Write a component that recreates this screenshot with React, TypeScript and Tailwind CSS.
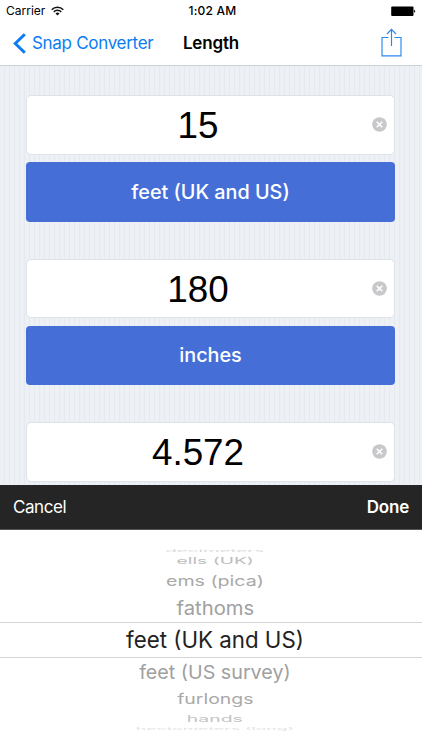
import React from "react";

interface Conversion {
  value: string;
  unit?: string;
}

const conversions: Conversion[] = [
  { value: "15", unit: "feet (UK and US)" },
  { value: "180", unit: "inches" },
  { value: "4.572" },
];

// Rows of the wheel, flattened towards the top and bottom edges
const wheelAbove = [
  { label: "decimeters", row: "h-[8px] text-[#dadada]", text: "scale-x-[0.94] scale-y-[0.16]" },
  { label: "ells (UK)", row: "h-[12px] text-[#bdbdbd]", text: "scale-x-[0.96] scale-y-[0.45]" },
  { label: "ems (pica)", row: "h-[27px] text-[#a9a9a9]", text: "scale-x-[0.98] scale-y-[0.72]" },
  { label: "fathoms", row: "h-[28px] text-[#a0a0a0]", text: "scale-x-[1.01] scale-y-[0.95]" },
];

const wheelBelow = [
  { label: "feet (US survey)", row: "h-[28px] text-[#a0a0a0]", text: "scale-x-[0.985] scale-y-[0.95]" },
  { label: "furlongs", row: "h-[26px] text-[#a9a9a9]", text: "scale-x-[0.97] scale-y-[0.72]" },
  { label: "hands", row: "h-[13px] text-[#c4c4c4]", text: "scale-x-[0.97] scale-y-[0.45]" },
  { label: "hectometers (long)", row: "h-[7px] text-[#e2e2e2]", text: "scale-x-[0.88] scale-y-[0.16]" },
];

const StatusBar = () => (
  <div className="grid h-[22px] grid-cols-3 items-center px-[6px] text-[12px] leading-none">
    <div className="flex items-center gap-[6px]">
      <span>Carrier</span>
      <svg width="13" height="10" viewBox="0 0 13 10" fill="none" stroke="#111" strokeWidth="1.5">
        <path d="M0.7 3.7a8.2 8.2 0 0 1 11.6 0" />
        <path d="M2.8 5.9a5.2 5.2 0 0 1 7.4 0" />
        <path d="M6.5 9.5 4.5 7.5a2.8 2.8 0 0 1 4 0z" fill="#111" stroke="none" />
      </svg>
    </div>
    <span className="pl-[3px] text-center font-medium tracking-[0.25px]">1:02 AM</span>
    <svg className="justify-self-end" width="26" height="11" viewBox="0 0 26 11">
      <rect x="1.2" y="0.5" width="22.3" height="9.5" rx="1" />
      <path d="M24.1 3.7v3q1-.4 1-1.5t-1-1.5z" />
    </svg>
  </div>
);

const NavBar = () => (
  <div className="grid h-[43px] grid-cols-[1fr_auto_1fr] items-center px-[13px]">
    <button className="flex items-center gap-[6px] text-[17px] leading-none text-[#0b7cf4]">
      <svg width="13" height="21" viewBox="0 0 13 21" fill="none" stroke="currentColor" strokeWidth="3">
        <path d="M11.8 1.2 2.3 10.5l9.5 9.3" />
      </svg>
      <span className="tracking-[-0.3px] whitespace-nowrap">Snap Converter</span>
    </button>
    <h1 className="text-[17px] leading-none font-semibold tracking-[-0.15px]">Length</h1>
    <svg className="mr-[7px] mb-[2px] justify-self-end" width="21" height="29" viewBox="0 0 21 29" fill="none" stroke="#2b88ea" strokeWidth="1.15">
      <path d="M7.5 9.5H1v18.3h19V9.5h-6.5M10.5 18V1.5M6 6l4.5-4.7L15 6" />
    </svg>
  </div>
);

const ConversionCard = ({ value, unit }: Conversion) => (
  <div className="flex flex-col gap-[7.5px]">
    <div className="relative flex h-[59.5px] items-center justify-center rounded-[5px] border border-[#dfe3e8] bg-white pr-[25px]">
      <span className="pt-[4px] font-['Liberation_Sans',sans-serif] text-[36.8px] leading-none">{value}</span>
      <svg className="absolute right-[7px]" width="15" height="15" viewBox="0 0 15 15">
        <circle cx="7.5" cy="7.5" r="7.3" fill="#c8c8cb" />
        <path d="m4.7 4.7 5.6 5.6m0-5.6-5.6 5.6" stroke="#fff" strokeWidth="1.6" />
      </svg>
    </div>
    {unit && (
      <button className="h-[59.5px] rounded-[4px] bg-[#456fd7] pt-[2px] text-[19.8px] font-medium text-white">
        {unit}
      </button>
    )}
  </div>
);

const App = () => {
  return (
    <div className="flex h-[750px] w-[422px] flex-col overflow-hidden bg-white font-['Inter',sans-serif] text-black">
      <header className="h-[66px] shrink-0 border-b border-[#cdd1d6]">
        <StatusBar />
        <NavBar />
      </header>
      <main className="flex h-[419px] shrink-0 flex-col gap-[37px] overflow-hidden bg-[repeating-linear-gradient(90deg,#edf1f6_0px,#edf1f6_4px,#e4eaf0_4px,#e4eaf0_5px)] pt-[29px] pr-[27px] pl-[26px]">
        {conversions.map((c) => (
          <ConversionCard key={c.value} {...c} />
        ))}
      </main>
      <div className="flex h-[45px] shrink-0 items-center justify-between border-b border-[#555] bg-[#252525] px-[13px] pt-[2px] text-[17px] text-white">
        <button className="tracking-[-0.45px]">Cancel</button>
        <button className="font-semibold tracking-[-0.2px]">Done</button>
      </div>
      {/* Unit picker */}
      <div className="flex flex-col pt-[17px] pl-[8px] text-[20px] leading-none whitespace-nowrap">
        {wheelAbove.map(({ label, row, text }) => (
          <div key={label} className={`flex items-center justify-center ${row}`}>
            <span className={text}>{label}</span>
          </div>
        ))}
        <div className="-ml-[8px] flex h-[36px] items-center justify-center border-y border-[#d4d4d4] pl-[8px] text-[22.3px] text-[#222]">
          <span>feet (UK and US)</span>
        </div>
        {wheelBelow.map(({ label, row, text }) => (
          <div key={label} className={`flex items-center justify-center ${row}`}>
            <span className={text}>{label}</span>
          </div>
        ))}
      </div>
    </div>
  );
};

export default App;
